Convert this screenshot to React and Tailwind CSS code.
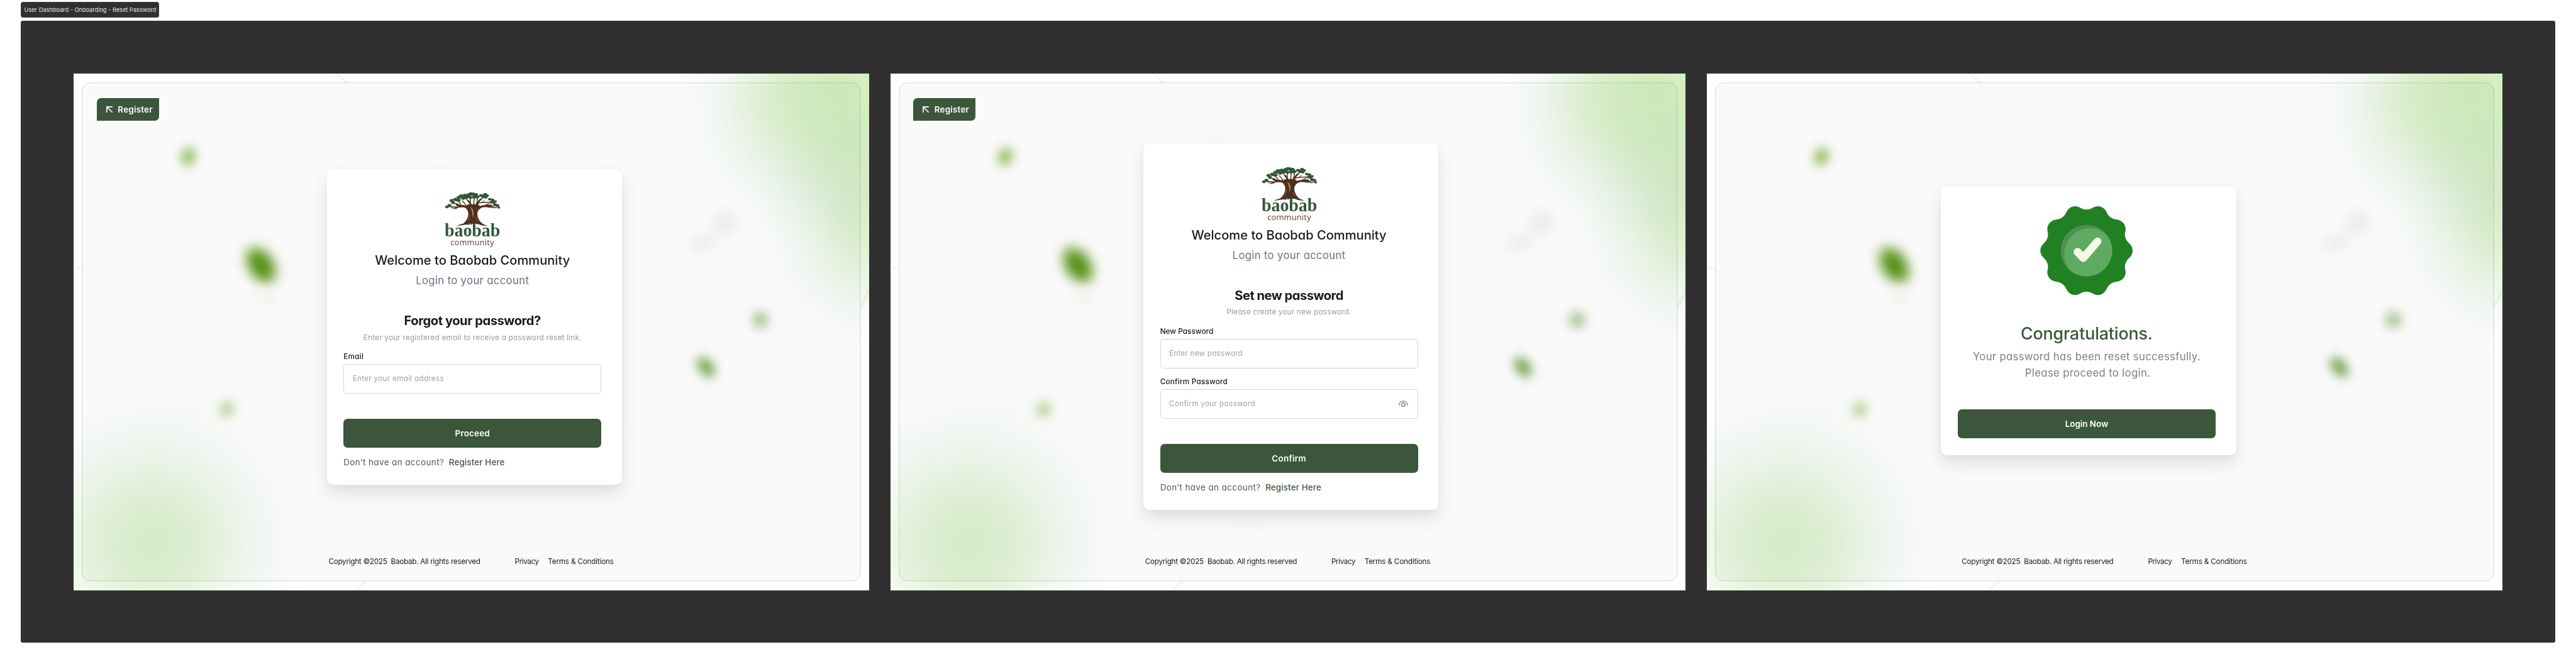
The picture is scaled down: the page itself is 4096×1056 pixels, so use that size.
import React from "react";
import { ArrowUpLeft } from "lucide-react";

/* ---------- decorative page background ---------- */

function Backdrop({ id }) {
  return (
    <svg className="absolute inset-0 h-full w-full" viewBox="0 0 1512 982" fill="none" aria-hidden="true">
      <defs>
        <radialGradient id={`${id}-glow`}>
          <stop offset="0" stopColor="#d0edbb" />
          <stop offset="0.25" stopColor="#d5efc4" />
          <stop offset="0.42" stopColor="#dff2d2" />
          <stop offset="0.58" stopColor="#ebf6e4" />
          <stop offset="0.72" stopColor="#f3faf4" />
          <stop offset="0.87" stopColor="#fbfefb" />
          <stop offset="1" stopColor="#ffffff" />
        </radialGradient>
        <radialGradient id={`${id}-soft`}>
          <stop offset="0" stopColor="#dcf1d0" />
          <stop offset="0.2" stopColor="#dff2d2" />
          <stop offset="0.35" stopColor="#e6f4dd" />
          <stop offset="0.5" stopColor="#eef8ea" />
          <stop offset="0.68" stopColor="#f6fbf7" />
          <stop offset="0.85" stopColor="#fcfefc" />
          <stop offset="1" stopColor="#ffffff" />
        </radialGradient>
        <linearGradient id={`${id}-leaf`} x1="0.5" y1="0" x2="0.5" y2="1">
          <stop offset="0" stopColor="#83b13c" />
          <stop offset="0.4" stopColor="#4d8b0e" />
          <stop offset="0.75" stopColor="#568f18" />
          <stop offset="1" stopColor="#85b548" />
        </linearGradient>
      </defs>

      <rect width="1512" height="982" fill="#ffffff" />
      <g stroke="#f5f5f5" strokeWidth="5">
        <path d="M498 0 Q510 9 526 22" />
        <path d="M0 368 Q10 370 18 374" />
        <path d="M558 962 L534 984" />
        <path d="M1512 410 Q1504 430 1494 445" />
      </g>

      <rect x="16.5" y="17.5" width="1479" height="947" rx="15.5" fill="#fafafa" />
      <g stroke="#f9f9f9" strokeWidth="34">
        <path d="M535 40 Q620 130 700 200" />
        <path d="M150 190 Q170 290 220 360 Q290 480 270 590 Q240 680 120 650" />
        <path d="M545 950 Q620 910 700 850" />
        <path d="M1060 690 Q1200 610 1370 520" />
        <path d="M1090 340 Q1180 340 1240 280" />
        <path d="M1110 760 L1250 880" />
      </g>

      <circle cx="1450" cy="40" r="300" fill={`url(#${id}-glow)`} className="mix-blend-multiply" />
      <circle cx="1534" cy="290" r="245" fill={`url(#${id}-soft)`} className="mix-blend-multiply" />
      <circle cx="150" cy="892" r="300" fill={`url(#${id}-soft)`} className="mix-blend-multiply" />

      <rect x="16.5" y="17.5" width="1479" height="947" rx="15.5" stroke="#000000" strokeOpacity="0.18" />

      <ellipse cx="218" cy="158" rx="13" ry="18" transform="rotate(18 218 158)" fill="#93b95c" className="blur-[10px]" />
      <ellipse cx="356" cy="364" rx="23" ry="39" transform="rotate(-33 356 364)" fill={`url(#${id}-leaf)`} className="blur-[12px]" />
      <ellipse cx="365" cy="425" rx="22" ry="14" fill="#f3f4f0" className="blur-[9px]" />
      <ellipse cx="291" cy="638" rx="13" ry="15" transform="rotate(30 291 638)" fill="#b3cc8c" className="blur-[10px]" />
      <ellipse cx="1305" cy="468" rx="15" ry="15" fill="#a3bf88" className="blur-[10px]" />
      <ellipse cx="1202" cy="558" rx="13" ry="22" transform="rotate(-38 1202 558)" fill="#739f4c" className="blur-[10px]" />
      <ellipse cx="1238" cy="283" rx="18" ry="20" fill="#e6e7e6" className="blur-[13px]" />
      <ellipse cx="1198" cy="322" rx="28" ry="12" transform="rotate(-20 1198 322)" fill="#e9ebe9" className="blur-[12px]" />
    </svg>
  );
}

/* ---------- logo ---------- */

const CANOPY = [
  [90, 130, 12], [104, 122, 13], [116, 94, 12], [126, 106, 12], [138, 88, 14], [152, 92, 13],
  [158, 76, 14], [172, 67, 13], [183, 80, 14], [192, 64, 14], [203, 74, 15], [214, 62, 14],
  [226, 56, 13], [240, 58, 15], [255, 60, 14], [264, 72, 14], [246, 74, 13], [224, 76, 12],
  [284, 64, 12], [297, 71, 14], [308, 60, 13], [320, 66, 10], [312, 76, 11], [335, 86, 11],
  [350, 90, 12], [356, 103, 13], [366, 98, 9], [364, 116, 12], [377, 122, 13], [385, 133, 9],
  [344, 104, 10], [160, 92, 10],
];

function clump(cx, cy, r, seed) {
  const n = 18;
  const pts = [];
  for (let i = 0; i < n; i++) {
    const a = (i / n) * Math.PI * 2 + seed;
    const k = i % 2 ? 0.72 : 1 + 0.15 * Math.sin(seed * 7 + i * 3);
    pts.push(`${(cx + Math.cos(a) * r * k * 1.1).toFixed(1)},${(cy + Math.sin(a) * r * k * 0.8).toFixed(1)}`);
  }
  return pts.join(" ");
}

function Logo() {
  return (
    <svg className="h-[111px] w-[110px] overflow-visible" viewBox="70 33 330 333" role="img" aria-label="Baobab Community">
      <g fill="none" stroke="#4f301d" strokeLinecap="round" strokeLinejoin="round">
        <path strokeWidth="13" d="M226 160 Q212 128 184 126 Q160 126 146 116" />
        <path strokeWidth="12" d="M258 158 Q272 128 300 126 Q326 126 340 122" />
        <path strokeWidth="10" d="M238 150 Q232 116 212 96" />
        <path strokeWidth="10" d="M250 150 Q256 112 282 88" />
        <path strokeWidth="6" d="M184 126 Q150 134 128 130 L104 128 M170 126 Q148 136 128 140" />
        <path strokeWidth="5" d="M150 118 Q136 108 124 108 M172 124 Q168 108 156 98 M200 128 Q196 112 178 96 M212 96 Q204 88 198 80" />
        <path strokeWidth="5" d="M222 110 Q226 92 224 80 M243 140 Q242 110 246 84 M256 116 Q266 98 264 78 M282 88 Q292 82 300 74" />
        <path strokeWidth="5" d="M266 110 Q290 102 320 104 L344 102 M300 126 Q318 116 330 112 M330 124 Q352 128 366 122 M336 124 Q356 136 372 134 M312 126 Q330 134 348 134" />
        <path strokeWidth="3.5" d="M128 130 L116 138 M150 132 L142 142 M292 102 L304 94 M354 130 L362 138 M384 132 L387 140" />
      </g>
      <path
        fill="#4f301d"
        d="M204 118 Q222 112 232 118 Q242 110 256 116 Q268 112 278 124 L284 134 Q266 142 264 164 Q262 186 274 204 Q284 222 300 229 L322 237 Q300 238 284 234 Q268 226 256 227 Q244 225 234 227 L226 234 L222 222 L216 234 Q206 228 192 232 L142 239 Q166 229 184 225 Q204 208 211 182 Q216 152 196 134 Z"
      />
      <path fill="#c6935c" d="M224 130 Q240 142 242 162 Q243 178 236 194 Q238 166 232 152 Q228 140 224 130 Z" />
      <path fill="none" stroke="#b07f4c" strokeWidth="2.5" strokeLinecap="round" d="M219 178 Q217 196 209 210 M258 192 Q260 204 266 212" />
      <g fill="#33553a">
        {CANOPY.map(([x, y, r], i) => (
          <polygon key={i} points={clump(x, y, r, i * 0.7)} />
        ))}
      </g>
      <text x="77" y="300" textLength="317" lengthAdjust="spacingAndGlyphs" fontFamily="Liberation Serif, serif" fontWeight="700" fontSize="106" fill="#33553a">
        baobab
      </text>
      <text x="110" y="349" textLength="249" lengthAdjust="spacing" fontFamily="Open Sans, sans-serif" fontSize="46" fill="#5b4032">
        community
      </text>
    </svg>
  );
}

/* ---------- success badge ---------- */

function scallop(cx, cy, petals, lobeDist, lobeR, notchDist, notchR) {
  const step = (Math.PI * 2) / petals;
  const at = (d, a) => [cx + d * Math.cos(a), cy + d * Math.sin(a)];
  const joint = (lobeA, notchA) => {
    const [lx, ly] = at(lobeDist, lobeA);
    const [nx, ny] = at(notchDist, notchA);
    const t = lobeR / (lobeR + notchR);
    return `${(lx + (nx - lx) * t).toFixed(2)} ${(ly + (ny - ly) * t).toFixed(2)}`;
  };
  let d = `M${joint(0, -step / 2)}`;
  for (let i = 0; i < petals; i++) {
    const a = i * step;
    d += `A${lobeR} ${lobeR} 0 0 1 ${joint(a, a + step / 2)}`;
    d += `A${notchR} ${notchR} 0 0 0 ${joint(a + step, a + step / 2)}`;
  }
  return d + "Z";
}

function SuccessBadge() {
  return (
    <svg className="h-[176px] w-[176px]" viewBox="0 0 176 176" aria-hidden="true">
      <defs>
        <clipPath id="badge-disc">
          <circle cx="88" cy="88" r="49" />
        </clipPath>
      </defs>
      <path d={scallop(88, 88, 10, 69.7, 18, 100, 22)} fill="#208022" />
      <circle cx="88" cy="88" r="49" fill="#4f8f53" />
      <circle cx="94.5" cy="94.5" r="49" fill="#5faa62" clipPath="url(#badge-disc)" />
      <path d="M71 90.3 L81.8 102 L109 70.5" fill="none" stroke="#f5fae5" strokeWidth="15" strokeLinecap="round" strokeLinejoin="round" />
    </svg>
  );
}

/* ---------- form pieces ---------- */

function PasswordEye() {
  return (
    <svg className="h-5 w-5" viewBox="0 0 20 20" fill="none" stroke="#667085" strokeWidth="1.5" strokeLinecap="round" aria-hidden="true">
      <path d="M1.6 12.4C2.2 8 5.6 4.7 10 4.7s7.8 3.3 8.4 7.7" />
      <circle cx="10" cy="11.4" r="3.5" />
    </svg>
  );
}

function Field({ label, labelClass, placeholder, textClass, icon }) {
  return (
    <div className="flex flex-col gap-1">
      <span className={`text-sm font-medium text-[#101828] ${labelClass}`}>{label}</span>
      <div className="flex h-14 items-center justify-between rounded-md border border-[#d0d5dd] bg-white px-4">
        <span className={`text-sm text-[#98a2b3] ${textClass}`}>{placeholder}</span>
        {icon}
      </div>
    </div>
  );
}

function PrimaryButton({ children, className }) {
  return (
    <button className={`flex h-[55px] w-[490px] shrink-0 items-center justify-center rounded-lg bg-[#3c563c] text-base font-semibold text-white ${className}`}>
      {children}
    </button>
  );
}

function Card({ className, children }) {
  return (
    <section className={`flex w-[561px] flex-col rounded-xl bg-white pl-8 shadow-[0_16px_32px_rgba(38,66,64,0.13),0_3px_12px_rgba(38,66,64,0.03)] ${className}`}>
      {children}
    </section>
  );
}

function AuthCard({ title, titleClass, hint, hintClass, action, actionClass, className, children }) {
  return (
    <Card className={`pt-10 font-['Inter',sans-serif] [font-feature-settings:'cv11'] ${className}`}>
      <div className="flex w-[490px] flex-col whitespace-nowrap">
        <header className="flex flex-col items-center text-center">
          <Logo />
          <h1 className="mt-[7.5px] text-2xl font-medium tracking-[0.03px] text-[#1a1a1a]">Welcome to Baobab Community</h1>
          <p className="mt-[7.5px] text-xl leading-[30px] tracking-[0.4px] text-[#667085]">Login to your account</p>
          <h2 className={`mt-[45px] text-2xl font-bold text-[#1a1a1a] ${titleClass}`}>{title}</h2>
          <p className={`mt-1.5 text-sm text-[#999999] ${hintClass}`}>{hint}</p>
        </header>
        <div className="mt-4 flex flex-col gap-4">{children}</div>
        <PrimaryButton className={`mt-12 ${actionClass}`}>{action}</PrimaryButton>
        <p className="mt-[15.5px] flex gap-[9px] text-base text-[#555555]">
          <span className="tracking-[0.52px]">Don’t have an account?</span>
          <a className="font-medium tracking-[0.18px] text-[#3c563c]">Register Here</a>
        </p>
      </div>
    </Card>
  );
}

function RegisterButton() {
  return (
    <button className="ml-11 flex h-11 w-[118px] shrink-0 items-center gap-1 rounded-tl-lg rounded-br-lg bg-[#3c563c] pl-3 font-['Inter',sans-serif] text-base font-semibold tracking-[0.28px] text-white">
      <ArrowUpLeft className="h-6 w-6" strokeWidth={2} />
      Register
    </button>
  );
}

function Screen({ id, children }) {
  return (
    <article className="relative isolate flex h-[982px] w-[1512px] shrink-0 flex-col overflow-hidden bg-white">
      <Backdrop id={id} />
      <div className="relative flex flex-1 flex-col pt-[46px]">
        {children}
        <footer className="mt-auto flex pb-[44.5px] pl-[484.5px] font-['Inter',sans-serif] text-sm whitespace-pre text-[#1a1a1a]">
          <span className="w-[354px] tracking-[-0.33px]">{"Copyright ©2025  Baobab. All rights reserved"}</span>
          <span className="w-[63px] tracking-[-0.5px]">Privacy</span>
          <span className="tracking-[-0.22px]">Terms &amp; Conditions</span>
        </footer>
      </div>
    </article>
  );
}

export default function App() {
  return (
    <div className="h-[1056px] w-[4096px] overflow-hidden bg-white">
      <main className="flex h-[1262px] w-[4896px] flex-col items-start bg-white pt-1 pl-10 [zoom:0.8366]">
        <div className="flex h-[30px] w-[263px] items-center justify-center rounded-sm border border-[#444444] bg-[#303030] font-['Inter',sans-serif] text-[11px] whitespace-nowrap text-[#e4e4e4]">
          User Dashboard - Onboarding - Reset Password
        </div>
        <div className="mt-1.5 flex h-[1182px] w-[4816px] gap-10 rounded-sm bg-[#303030] p-[100px]">
          <Screen id="forgot">
            <RegisterButton />
            <AuthCard
              className="mt-[91px] ml-[481px] h-[601px]"
              title="Forgot your password?"
              titleClass="tracking-[-0.5px]"
              hint="Enter your registered email to receive a password reset link."
              hintClass="tracking-[0.29px]"
              action="Proceed"
              actionClass="tracking-[0.28px]"
            >
              <Field label="Email" labelClass="tracking-[0.35px]" placeholder="Enter your email address" textClass="tracking-[0.35px]" />
            </AuthCard>
          </Screen>

          <Screen id="renew">
            <RegisterButton />
            <AuthCard
              className="mt-[43px] ml-[481px] h-[697px]"
              title="Set new password"
              titleClass="tracking-[-0.58px]"
              hint="Please create your new password."
              hintClass="tracking-[0.26px]"
              action="Confirm"
              actionClass="tracking-[0.37px]"
            >
              <Field label="New Password" labelClass="tracking-[0.08px]" placeholder="Enter new password" textClass="tracking-[0.26px]" />
              <Field label="Confirm Password" labelClass="tracking-[0.27px]" placeholder="Confirm your password" textClass="tracking-[0.38px]" icon={<PasswordEye />} />
            </AuthCard>
          </Screen>

          <Screen id="done">
            <Card className="mt-[169px] ml-[445px] h-[510px] pt-[34px] font-['Inter',sans-serif]">
              <div className="flex w-[490px] flex-col items-center text-center">
                <SuccessBadge />
                <h1 className="mt-[49px] text-[32px] leading-10 font-medium tracking-[-0.14px] text-[#3c563c]">Congratulations.</h1>
                <p className="mt-2.5 text-xl leading-[30px] text-[#808080] [font-feature-settings:'cv11']">
                  <span className="block tracking-[0.37px]">Your password has been reset successfully.</span>
                  <span className="block pl-1 tracking-[0.4px]">Please proceed to login.</span>
                </p>
                <PrimaryButton className="mt-[54px]">Login Now</PrimaryButton>
              </div>
            </Card>
          </Screen>
        </div>
      </main>
    </div>
  );
}
